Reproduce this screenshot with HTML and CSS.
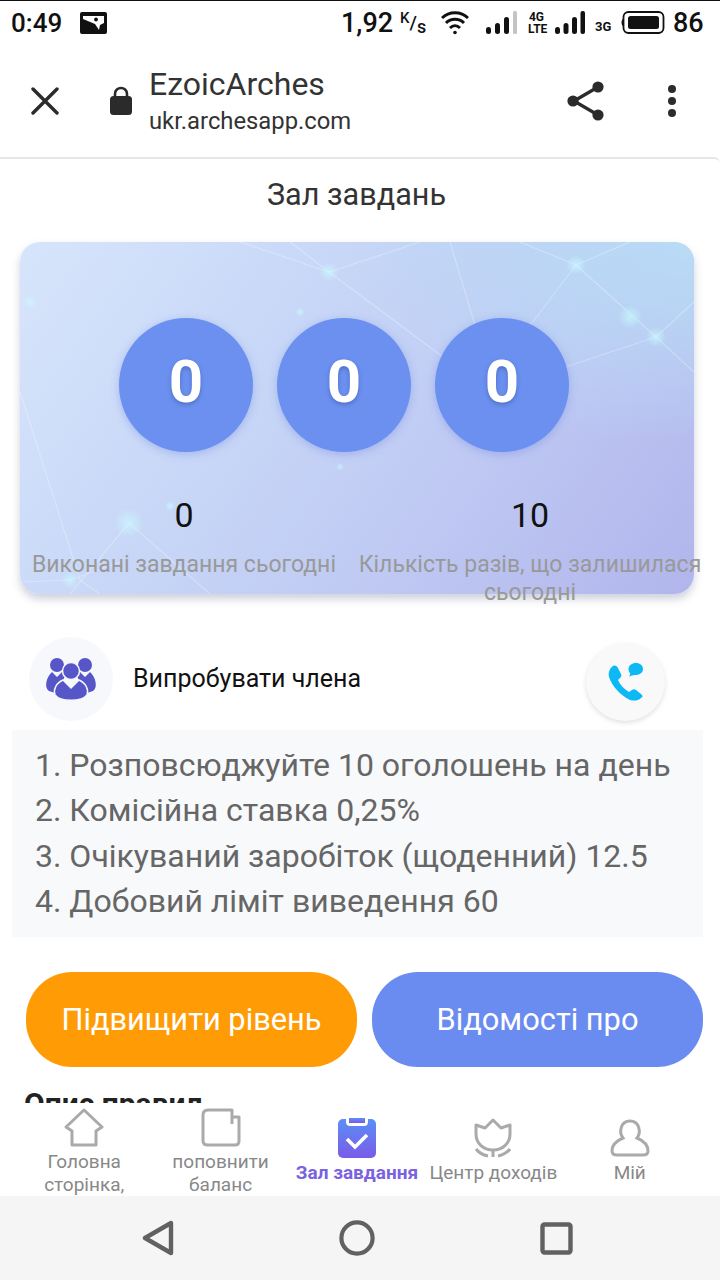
FILE: index.html
```html
<!DOCTYPE html>
<html lang="uk">
<head>
    <meta charset="UTF-8">
    <meta name="viewport" content="width=device-width, initial-scale=1.0">
    <title>Зал завдань</title>
    <link rel="stylesheet" href="styles.css">
</head>
<body>
<div class="phone">

    <!-- status bar -->
    <div class="status">
        <span class="time">0:49</span>
        <svg class="st-image" width="27" height="22" viewBox="0 0 27 22">
            <rect width="27" height="22" rx="2" fill="#111"/>
            <path d="M3 4 H24 V11 L20 13 L19 18 L15 12 L3 7Z" fill="#fff"/>
            <circle cx="16" cy="7.5" r="1.9" fill="#111"/>
        </svg>
        <span class="speed">1,92</span>
        <span class="speed-unit"><sup>K</sup>/<sub>s</sub></span>
        <svg class="st-wifi" width="28" height="24" viewBox="0 0 28 24" fill="none" stroke="#111" stroke-width="3">
            <path d="M1 7 C8 0 20 0 27 7"/>
            <path d="M5 12 C10 7 18 7 23 12"/>
            <path d="M9 17 C12 14 16 14 19 17"/>
            <circle cx="14" cy="21.5" r="1.8" fill="#111" stroke="none"/>
        </svg>
        <svg class="st-sig1" width="32" height="24" viewBox="0 0 32 24">
            <rect x="0" y="16" width="5" height="7" rx="2.5" fill="#111"/>
            <rect x="9" y="12" width="5" height="11" rx="2.5" fill="#111"/>
            <rect x="18" y="6" width="5" height="17" rx="2.5" fill="#111"/>
            <rect x="27" y="0" width="4" height="23" rx="1.5" fill="#c4c4c4"/>
        </svg>
        <span class="st-4g">4G<br>LTE</span>
        <svg class="st-sig2" width="30" height="24" viewBox="0 0 30 24">
            <rect x="0" y="16" width="5" height="7" rx="2.5" fill="#111"/>
            <rect x="8.5" y="12" width="5" height="11" rx="2.5" fill="#111"/>
            <rect x="17" y="6" width="5" height="17" rx="2.5" fill="#111"/>
            <rect x="25.5" y="0" width="4.5" height="23" rx="2" fill="#111"/>
        </svg>
        <span class="st-3g">3G</span>
        <svg class="st-batt" width="44" height="24" viewBox="0 0 44 24">
            <rect x="2.5" y="1" width="40" height="21" rx="5" fill="none" stroke="#111" stroke-width="1.8"/>
            <rect x="7" y="5" width="31" height="13" rx="2.5" fill="#111"/>
            <path d="M2 8 C0 9 0 14 2 15Z" fill="#111"/>
        </svg>
        <span class="batt-num">86</span>
    </div>

    <!-- browser toolbar -->
    <div class="toolbar">
        <svg class="tb-close" width="28" height="28" viewBox="0 0 28 28" stroke="#2b2b2b" stroke-width="3.4" stroke-linecap="round">
            <path d="M2 2 L26 26 M26 2 L2 26"/>
        </svg>
        <svg class="tb-lock" width="22" height="29" viewBox="0 0 22 29">
            <path d="M5 12 V8 C5 0 17 0 17 8 V12" fill="none" stroke="#2b2b2b" stroke-width="2.6"/>
            <rect y="10" width="22" height="19" rx="3.5" fill="#2b2b2b"/>
        </svg>
        <div class="tb-text">
            <div class="tb-title">EzoicArches</div>
            <div class="tb-url">ukr.archesapp.com</div>
        </div>
        <svg class="tb-share" width="38" height="40" viewBox="0 0 38 40">
            <path d="M7 20 L31 6 M7 20 L31 34" stroke="#2b2b2b" stroke-width="3.2"/>
            <circle cx="6" cy="20" r="5.6" fill="#2b2b2b"/>
            <circle cx="31" cy="6" r="5.6" fill="#2b2b2b"/>
            <circle cx="31" cy="34" r="5.6" fill="#2b2b2b"/>
        </svg>
        <svg class="tb-more" width="10" height="34" viewBox="0 0 10 34" fill="#2b2b2b">
            <circle cx="5" cy="5" r="4"/>
            <circle cx="5" cy="17" r="4"/>
            <circle cx="5" cy="29" r="4"/>
        </svg>
    </div>

    <!-- page -->
    <div class="page">
        <div class="page-title">Зал завдань</div>

        <div class="card">
            <svg class="card-net" width="674" height="352" viewBox="0 0 674 352" fill="none" stroke="#fff" stroke-opacity="0.28" stroke-width="1.2">
                <defs>
                    <radialGradient id="glow">
                        <stop offset="0" stop-color="#c8fbff" stop-opacity="0.7"/>
                        <stop offset="1" stop-color="#c8fbff" stop-opacity="0"/>
                    </radialGradient>
                </defs>
                <path d="M270 0 L309 30 L400 0 M309 30 L470 150 L530 130 L636 95 L674 60"/>
                <path d="M430 0 L460 100 L470 150 M309 30 L220 0 M556 23 L500 0 M556 23 L610 0 M556 23 L490 110 M556 23 L636 95 L674 130"/>
                <path d="M0 150 L60 338 L80 352 M109 281 L50 352 M109 281 L190 352 M50 338 L0 340 M50 338 L100 320"/>
                <g stroke="none" fill="url(#glow)">
                    <circle cx="309" cy="30" r="10"/>
                    <circle cx="556" cy="23" r="10"/>
                    <circle cx="636" cy="95" r="10"/>
                    <circle cx="109" cy="281" r="15"/>
                    <circle cx="50" cy="338" r="9"/>
                    <circle cx="10" cy="60" r="7"/>
                    <circle cx="610" cy="75" r="12"/>
                    <circle cx="150" cy="264" r="5"/>
                    <circle cx="320" cy="225" r="4"/>
                    <circle cx="280" cy="70" r="5"/>
                </g>
            </svg>
            <div class="card-body">
                <div class="circles">
                    <div class="circle">0</div>
                    <div class="circle">0</div>
                    <div class="circle">0</div>
                </div>
                <div class="stats">
                    <div class="stat stat-done">
                        <div class="stat-num">0</div>
                        <div class="stat-label">Виконані завдання сьогодні</div>
                    </div>
                    <div class="stat stat-left">
                        <div class="stat-num">10</div>
                        <div class="stat-label">Кількість разів, що залишилася сьогодні</div>
                    </div>
                </div>
            </div>
        </div>

        <div class="member">
            <div class="member-icon">
                <svg width="54" height="44" viewBox="0 0 54 44" fill="#5656c8">
                    <circle cx="13" cy="8" r="7"/>
                    <circle cx="41" cy="8" r="7"/>
                    <path d="M8 15 L13 20 L18 15 L22 18 L11 36 L5 34 C0 31 2 20 8 15Z"/>
                    <path d="M46 15 L41 20 L36 15 L32 18 L43 36 L49 34 C54 31 52 20 46 15Z"/>
                    <circle cx="27" cy="14" r="8.5" stroke="#f7f8fc" stroke-width="1.5"/>
                    <path d="M19 23 L27 31 L35 23 C42 26 45 33 43 38 C38 45 16 45 11 38 C9 33 12 26 19 23Z" stroke="#f7f8fc" stroke-width="1.5"/>
                </svg>
            </div>
            <div class="member-name">Випробувати члена</div>
            <div class="call">
                <svg width="36" height="38" viewBox="0 0 36 38" fill="#0cb9f6">
                    <path d="M5 3 C7 2 9 3 10 5 L13 11 C14 13 13 14 12 15 L10 17 C12 22 16 26 21 29 L24 27 C25 26 27 26 28 27 L33 31 C35 33 35 34 33 35 C30 38 26 38 22 37 C12 32 4 23 1 14 C0 9 2 5 5 3Z"/>
                    <path d="M28 0 C32 0 35 2.5 35 6 C35 10 31 12 27 12 C25 12 23 12.5 21 13.5 C22 12 22.5 11 22 10 C21 9 20.5 7.5 20.5 6 C20.5 2.5 24 0 28 0Z"/>
                </svg>
            </div>
        </div>

        <div class="rules">
            <div>1. Розповсюджуйте 10 оголошень на день</div>
            <div>2. Комісійна ставка 0,25%</div>
            <div>3. Очікуваний заробіток (щоденний) 12.5</div>
            <div>4. Добовий ліміт виведення 60</div>
        </div>

        <div class="actions">
            <div class="btn btn-up">Підвищити рівень</div>
            <div class="btn btn-info">Відомості про</div>
        </div>

        <div class="rules-title">Опис правил</div>
    </div>

    <!-- bottom tabs -->
    <div class="tabs">
        <div class="tab">
            <svg width="40" height="40" viewBox="0 0 40 40" fill="none" stroke="#aaa" stroke-width="3" stroke-linejoin="round">
                <path d="M20 3 L38 20 L32 24 V38 H8 V24 L2 20Z"/>
            </svg>
            <div class="tab-label">Головна сторінка,</div>
        </div>
        <div class="tab">
            <svg width="40" height="40" viewBox="0 0 40 40" fill="none" stroke="#aaa" stroke-width="3" stroke-linejoin="round">
                <path d="M31 17 V3 H7 Q2 3 2 8 V34 Q2 38 7 38 H34 Q38 38 38 34 V10 H31"/>
            </svg>
            <div class="tab-label">поповнити баланс</div>
        </div>
        <div class="tab tab-active">
            <svg width="40" height="40" viewBox="0 0 40 40">
                <defs>
                    <linearGradient id="taskFill" x1="0" y1="0" x2="0" y2="1">
                        <stop offset="0" stop-color="#5b8ff6"/>
                        <stop offset="1" stop-color="#7a5be8"/>
                    </linearGradient>
                </defs>
                <rect x="1" y="1" width="38" height="39" rx="5" fill="url(#taskFill)"/>
                <path d="M9 1 H31 V4 Q31 8 27 8 H13 Q9 8 9 4Z" fill="#fff"/>
                <rect x="12" y="0" width="16" height="5" fill="url(#taskFill)"/>
                <path d="M10 21 L18 29 L30 17" fill="none" stroke="#fff" stroke-width="3.6"/>
            </svg>
            <div class="tab-label">Зал завдання</div>
        </div>
        <div class="tab">
            <svg width="40" height="40" viewBox="0 0 40 40" fill="none" stroke="#aaa" stroke-width="3">
                <path d="M3 7 L12 10 L20 2 L28 10 L37 7 V16 C37 25 30 32 20 32 C10 32 3 25 3 16Z" stroke-linejoin="round"/>
                <path d="M20 32 V39 M3 31 C6 35 10 37 15 38 M37 31 C34 35 30 37 25 38"/>
            </svg>
            <div class="tab-label">Центр доходів</div>
        </div>
        <div class="tab">
            <svg width="40" height="40" viewBox="0 0 40 40" fill="none" stroke="#aaa" stroke-width="3">
                <path d="M13 20 C9 15 10 3 20 3 C30 3 31 15 27 20 C34 23 38 28 38 33 C38 36 36 37 33 37 H7 C4 37 2 36 2 33 C2 28 6 23 13 20Z"/>
            </svg>
            <div class="tab-label">Мій</div>
        </div>
    </div>

    <!-- android nav -->
    <div class="navbar">
        <svg class="nav-back" width="32" height="36" viewBox="0 0 32 36" fill="none" stroke="#616161" stroke-width="4.4" stroke-linejoin="round">
            <path d="M29 3 V33 L3 18Z"/>
        </svg>
        <svg class="nav-home" width="36" height="36" viewBox="0 0 36 36" fill="none" stroke="#616161" stroke-width="4.2">
            <circle cx="18" cy="18" r="15.6"/>
        </svg>
        <svg class="nav-recent" width="33" height="33" viewBox="0 0 33 33" fill="none" stroke="#616161" stroke-width="4.4" stroke-linejoin="round">
            <rect x="2.5" y="2.5" width="28" height="28" rx="2"/>
        </svg>
    </div>

</div>
</body>
</html>
```

FILE: styles.css
```css
* {
    box-sizing: border-box;
}

html, body {
    margin: 0;
    padding: 0;
}

body {
    font-family: Roboto, 'Noto Sans', sans-serif;
    background-color: #fff;
}

.phone {
    width: 720px;
    height: 1280px;
    display: flex;
    flex-direction: column;
    overflow: hidden;
    background-color: #fff;
}

/* status bar */
.status {
    flex: none;
    height: 44px;
    border-top: 1px solid #111;
    display: flex;
    align-items: center;
    padding-left: 11px;
    color: #111;
}

.time {
    font-size: 26px;
    font-weight: 500;
    width: 54px;
}

.st-image { margin-left: 15px; }

.speed {
    margin-left: 234px;
    font-size: 27px;
    font-weight: 500;
    width: 54px;
}

.speed-unit {
    margin-left: 5px;
    width: 26px;
    font-size: 19px;
    font-weight: 500;
    white-space: nowrap;
}

.speed-unit sup {
    font-size: 15px;
    vertical-align: 6px;
    line-height: 0;
}

.speed-unit sub {
    font-size: 18px;
    vertical-align: -4px;
    line-height: 0;
}

.st-wifi { margin-left: 15px; }
.st-sig1 { margin-left: 17px; }

.st-4g {
    margin-left: 10px;
    width: 17px;
    font-size: 12px;
    line-height: 12px;
    font-weight: 700;
    text-align: center;
    white-space: nowrap;
}

.st-sig2 { margin-left: 10px; }

.st-3g {
    margin-left: 10px;
    width: 18px;
    margin-top: 7px;
    font-size: 13px;
    font-weight: 700;
}

.st-batt { margin-left: 8px; }

.batt-num {
    margin-left: 8px;
    font-size: 27px;
    font-weight: 500;
}

/* toolbar */
.toolbar {
    flex: none;
    height: 113px;
    display: flex;
    align-items: center;
    padding-left: 31px;
    color: #333;
}

.tb-lock { margin-left: 51px; }
.tb-text { margin-left: 17px; width: 418px; }

.tb-title {
    font-size: 32px;
    line-height: 38px;
    margin-top: 2px;
}

.tb-url {
    font-size: 23.8px;
    line-height: 36px;
}

.tb-more { margin-left: 62px; }

/* page */
.page {
    flex: 1;
    min-height: 0;
    overflow: hidden;
    border-top: 2px solid #e6e6e6;
    border-top-right-radius: 6px;
}

.page-title {
    height: 71px;
    margin-bottom: 12px;
    line-height: 71px;
    text-align: center;
    font-size: 30.6px;
    color: #333;
    padding-right: 7px;
}

.card {
    position: relative;
    width: 674px;
    height: 352px;
    margin-left: 20px;
    border-radius: 20px;
    background: linear-gradient(125deg, #d7e5fb 0%, #c8d7f7 35%, #bfc9f3 65%, #b1b5ec 100%);
    box-shadow: 0 5px 9px rgba(80, 90, 130, 0.28);
}

.card::before {
    content: "";
    position: absolute;
    top: 0;
    right: 0;
    width: 50%;
    height: 55%;
    border-radius: 20px;
    background: radial-gradient(ellipse at top right, #b8dcf6 0%, rgba(184, 220, 246, 0) 75%);
}

.card-net {
    position: absolute;
    top: 0;
    left: 0;
    border-radius: 20px;
    overflow: hidden;
}

.card-body {
    position: relative;
}

.circles {
    display: flex;
    gap: 24px;
    padding-top: 76px;
    padding-left: 99px;
}

.circle {
    width: 134px;
    height: 134px;
    border-radius: 50%;
    background-color: #6b90ef;
    box-shadow: 0 2px 8px rgba(90, 120, 220, 0.35);
    color: #fff;
    font-size: 60px;
    font-weight: 700;
    line-height: 128px;
    text-align: center;
    text-shadow: 0 2px 4px rgba(40, 60, 130, 0.4);
}

.stats {
    display: flex;
    gap: 21px;
    margin-top: 43px;
    padding-left: 12px;
}

.stat {
    flex: none;
    text-align: center;
}

.stat-done { width: 304px; }
.stat-left { width: 346px; }

.stat-num {
    font-size: 34px;
    line-height: 40px;
    color: #111;
}

.stat-label {
    margin-top: 16px;
    font-size: 23px;
    line-height: 28px;
    color: #999;
}

.member {
    display: flex;
    align-items: flex-start;
    margin-top: 43px;
    padding-left: 29px;
}

.member-icon {
    width: 84px;
    height: 84px;
    border-radius: 50%;
    background-color: #f7f8fc;
    display: flex;
    align-items: center;
    justify-content: center;
}

.member-name {
    margin-left: 20px;
    width: 453px;
    font-size: 25px;
    line-height: 84px;
    color: #111;
}

.call {
    width: 79px;
    height: 78px;
    margin-top: 6px;
    border-radius: 50%;
    background-color: #f9f9f9;
    box-shadow: 0 2px 5px rgba(0, 0, 0, 0.12);
    display: flex;
    align-items: center;
    justify-content: center;
}

.rules {
    width: 691px;
    margin: 9px 0 0 12px;
    padding: 13px 23px;
    background-color: #f8f9fb;
    font-size: 32px;
    line-height: 45.3px;
    color: #666;
    white-space: nowrap;
}

.actions {
    display: grid;
    grid-template-columns: 331px 331px;
    gap: 15px;
    margin: 35px 0 0 26px;
}

.btn {
    height: 95px;
    border-radius: 46px;
    color: #fff;
    font-size: 30.8px;
    line-height: 95px;
    text-align: center;
}

.btn-up { background-color: #ff9c05; }
.btn-info { background-color: #6a8cf0; }

.rules-title {
    margin: 19px 0 0 24px;
    font-size: 30px;
    line-height: 36px;
    font-weight: 700;
    color: #222;
}

/* tabs */
.tabs {
    flex: none;
    height: 93px;
    display: flex;
    padding: 3px 22px 0 16px;
    background-color: #fff;
    overflow: hidden;
}

.tab {
    width: 136.4px;
    display: flex;
    flex-direction: column;
    align-items: center;
    justify-content: center;
    gap: 3px;
}

.tab svg { flex: none; }

.tab-label {
    width: 136px;
    font-size: 19px;
    line-height: 23px;
    text-align: center;
    color: #888;
}

.tab-active .tab-label {
    color: #7a62e0;
    font-weight: 700;
    white-space: nowrap;
}

/* android nav */
.navbar {
    flex: none;
    height: 84px;
    display: flex;
    align-items: center;
    padding-left: 142px;
    background-color: #f5f5f5;
}

.nav-home { margin-left: 165px; }
.nav-recent { margin-left: 165px; }
```
